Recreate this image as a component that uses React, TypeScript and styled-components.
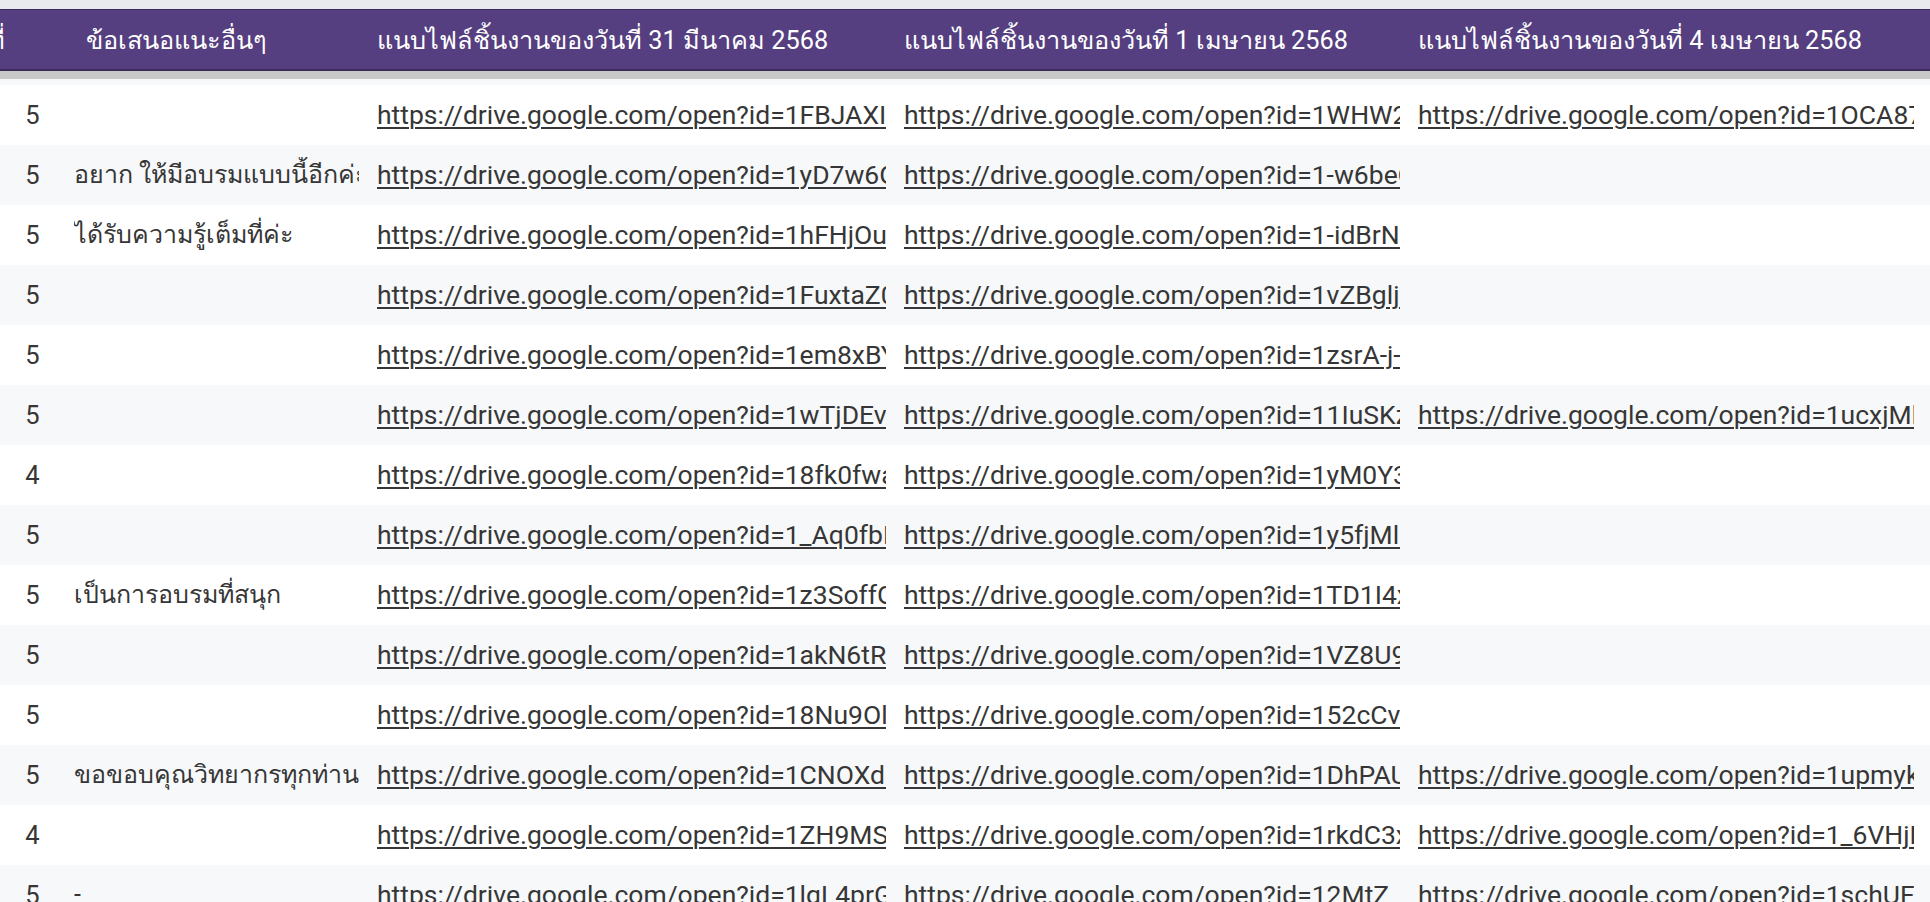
import React from "react";
import styled, { createGlobalStyle } from "styled-components";

const GlobalStyle = createGlobalStyle`
  html, body {
    margin: 0;
    padding: 0;
    background: #ffffff;
    overflow: hidden;
  }
  body {
    font-family: Roboto, "Noto Sans", "Liberation Sans", sans-serif;
  }
`;

const COLUMNS = "65px 303px 527px 514px 514px 1fr";

const Page = styled.div`
  height: 100vh;
  overflow: hidden;
  background: #ffffff;
  display: flex;
  flex-direction: column;
`;

const TopStrip = styled.div`
  height: 9px;
  flex: none;
  background: #e9eaed;
`;

const HeaderRow = styled.div`
  flex: none;
  display: grid;
  grid-template-columns: ${COLUMNS};
  align-items: center;
  height: 59px;
  background: #563f80;
  border-top: 1px solid #3b2b5b;
  border-bottom: 2px solid #3b2b5b;
  color: #ffffff;
  font-size: 25.3px;
  font-weight: 400;
  white-space: nowrap;
`;

const HeadCell = styled.div<{ $pl?: number; $tail?: boolean }>`
  display: flex;
  justify-content: ${(p) => (p.$tail ? "flex-end" : "flex-start")};
  overflow: hidden;
  padding-left: ${(p) => (p.$tail ? 0 : p.$pl ?? 9)}px;
  padding-right: ${(p) => (p.$tail ? 60 : 9)}px;
`;

const HeadText = styled.span`
  flex: none;
`;

const ShadowBand = styled.div`
  flex: none;
  height: 8px;
  background: #c8c8c8;
`;

const Body = styled.div`
  flex: 1;
  overflow: hidden;
  border-top: 6px solid #f7f8fa;
`;

const Row = styled.div<{ $alt: boolean }>`
  display: grid;
  grid-template-columns: ${COLUMNS};
  align-items: center;
  height: 60px;
  background: ${(p) => (p.$alt ? "#f7f8fa" : "#ffffff")};
  color: #363636;
  font-size: 25.5px;
  line-height: 36px;
  white-space: nowrap;
`;

const Cell = styled.div<{ $center?: boolean }>`
  padding: 0 9px;
  min-width: 0;
  text-align: ${(p) => (p.$center ? "center" : "left")};
`;

const Note = styled.span`
  display: block;
  overflow: hidden;
  font-size: 25px;
`;

const Link = styled.a`
  display: block;
  overflow: hidden;
  font-size: 26.5px;
  color: #363636;
  text-decoration: underline;
  text-decoration-thickness: 2px;
  text-underline-offset: 3px;
`;

const DRIVE = "https://drive.google.com/open?id=";

type RowData = {
  score: string;
  note: string;
  links: [string, string, string];
};

const rows: RowData[] = [
  { score: "5", note: "", links: ["1FBJAXIq8vNnK2pLrT0sWcYdEeFgHhJkL", "1WHW2a7pQxLmNnB3cVdT9eRfGs", "1OCA87kLmNpQrStUvWxYz0123abcd"] },
  { score: "5", note: "อยาก ให้มีอบรมแบบนี้อีกค่ะ", links: ["1yD7w6GhJkLmNpQrStUvWxYz01234", "1-w6beQxLmNnB3cVdT9eRfGsHh", ""] },
  { score: "5", note: "ได้รับความรู้เต็มที่ค่ะ", links: ["1hFHjOuZkLmNpQrStUvWxYz01234", "1-idBrNqQxLmNnB3cVdT9eRfGs", ""] },
  { score: "5", note: "", links: ["1FuxtaZ0kLmNpQrStUvWxYz01234", "1vZBgljQxLmNnB3cVdT9eRfGsHh", ""] },
  { score: "5", note: "", links: ["1em8xBYkLmNpQrStUvWxYz012345", "1zsrA-j-QxLmNnB3cVdT9eRfGs", ""] },
  { score: "5", note: "", links: ["1wTjDEvLmNpQrStUvWxYz0123456", "11IuSKzQxLmNnB3cVdT9eRfGs", "1ucxjMbLmNpQrStUvWxYz012345"] },
  { score: "4", note: "", links: ["18fk0fwaLmNpQrStUvWxYz012345", "1yM0Y3QxLmNnB3cVdT9eRfGsHh", ""] },
  { score: "5", note: "", links: ["1_Aq0fbKLmNpQrStUvWxYz012345", "1y5fjMlQxLmNnB3cVdT9eRfGsH", ""] },
  { score: "5", note: "เป็นการอบรมที่สนุก", links: ["1z3SoffGLmNpQrStUvWxYz012345", "1TD1I4xQxLmNnB3cVdT9eRfGsH", ""] },
  { score: "5", note: "", links: ["1akN6tRqLmNpQrStUvWxYz012345", "1VZ8U9QxLmNnB3cVdT9eRfGsHh", ""] },
  { score: "5", note: "", links: ["18Nu9OlLmNpQrStUvWxYz0123456", "152cCvwQxLmNnB3cVdT9eRfGsH", ""] },
  { score: "5", note: "ขอขอบคุณวิทยากรทุกท่าน", links: ["1CNOXdLmNpQrStUvWxYz01234567", "1DhPAUqxLmNnB3cVdT9eRfGsHh", "1upmykLmNpQrStUvWxYz0123456"] },
  { score: "4", note: "", links: ["1ZH9MSkLmNpQrStUvWxYz0123456", "1rkdC3xQxLmNnB3cVdT9eRfGsH", "1_6VHjLmNpQrStUvWxYz0123456"] },
  { score: "5", note: "-", links: ["1lgL4prGLmNpQrStUvWxYz012345", "12MtZ_xQxLmNnB3cVdT9eRfGsH", "1schUFLmNpQrStUvWxYz0123456"] },
  { score: "5", note: "", links: ["1abCdEfGLmNpQrStUvWxYz012345", "1qRsTuVxLmNnB3cVdT9eRfGsHh", ""] },
];

const headers = [
  "แนบไฟล์ชิ้นงานของวันที่ 31 มีนาคม 2568",
  "แนบไฟล์ชิ้นงานของวันที่ 1 เมษายน 2568",
  "แนบไฟล์ชิ้นงานของวันที่ 4 เมษายน 2568",
];

export default function App() {
  return (
    <>
      <GlobalStyle />
      <Page>
        <TopStrip />
        <HeaderRow>
          <HeadCell $tail>
            <HeadText>ความพึงพอใจในภาพรวมที่</HeadText>
          </HeadCell>
          <HeadCell $pl={21}>
            <HeadText>ข้อเสนอแนะอื่นๆ</HeadText>
          </HeadCell>
          {headers.map((h) => (
            <HeadCell key={h}>
              <HeadText>{h}</HeadText>
            </HeadCell>
          ))}
          <HeadCell />
        </HeaderRow>
        <ShadowBand />
        <Body>
          {rows.map((r, i) => (
            <Row key={i} $alt={i % 2 === 1}>
              <Cell $center>{r.score}</Cell>
              <Cell>
                <Note>{r.note}</Note>
              </Cell>
              {r.links.map((id, j) => (
                <Cell key={j}>
                  {id ? <Link href={"#" + id}>{DRIVE + id}</Link> : null}
                </Cell>
              ))}
              <Cell />
            </Row>
          ))}
        </Body>
      </Page>
    </>
  );
}
